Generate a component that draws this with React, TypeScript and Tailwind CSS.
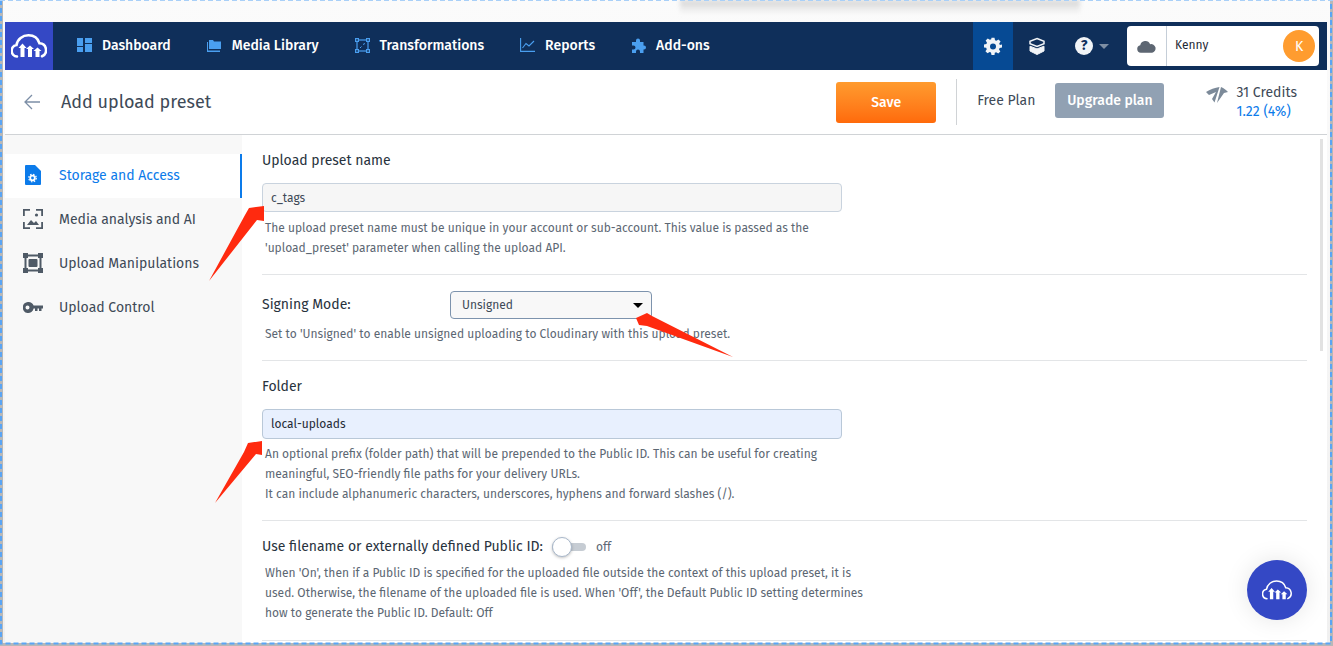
const FONT = "font-['Fira_Sans','Noto_Sans',sans-serif]";

function CloudLogo({ className, thin }: { className?: string; thin?: boolean }) {
  return (
    <svg viewBox="0 0 36 24" className={className} fill="none">
      <path d="M6 22.500A5.800 5.800 0 0 1 5.500 11C6.500 5 11.500 1.300 17.500 1.300c5.500 0 9.500 3.200 11 8a6.800 6.800 0 0 1 2.500 13" stroke="currentColor" strokeWidth={thin ? 1.800 : 2.600} strokeLinecap="round" />
      <path d="M11.500 9.500l4 4.500h-2v9h-4v-9h-2zM19 11.500l4 3.500h-2v8h-4v-8h-2zM26.500 13.500l4 3.500h-2v6h-4v-6h-2z" fill="currentColor" />
    </svg>
  );
}

function TopNavItem({ icon, label, className }: { icon: React.ReactNode; label: string; className: string }) {
  return (
    <div className={`flex items-center gap-[10px] pb-[2px] ${className}`}>
      {icon}
      <span className="text-[14px] font-medium text-white">{label}</span>
    </div>
  );
}

function SideItem({ icon, label, active }: { icon: React.ReactNode; label: string; active?: boolean }) {
  return (
    <div className={`flex h-11 items-center pb-[2px] pl-[18px] text-[14px] ${active ? 'border-r-2 border-[#0c7bea] bg-white text-[#0c7bea]' : 'text-[#3e4a57]'}`}>
      <span className="flex w-[36px]">{icon}</span>
      {label}
    </div>
  );
}

function Help({ children }: { children: React.ReactNode }) {
  return <p className="ml-[3px] text-[12px] leading-[20px] text-[#5c6773]">{children}</p>;
}

export default function App() {
  return (
    <div className={`relative h-[646px] w-[1333px] overflow-hidden bg-gradient-to-b from-[#fbfbfb] to-[#f0f0f0] pt-[22px] pl-[5px] ${FONT}`}>
      {/* Shadow of the window above */}
      <div className="absolute left-[680px] top-0 h-[14px] w-[400px] bg-gradient-to-b from-[#d4d4d4] to-transparent blur-[2px]" />

      <div className="relative w-[1322px]">
        {/* Top nav */}
        <header className="flex h-12 items-center bg-[#0f2f5a]">
          <div className="flex h-12 w-12 items-center justify-center bg-[#3448c5] text-white">
            <CloudLogo className="w-9" />
          </div>
          <TopNavItem
            label="Dashboard"
            className="ml-6"
            icon={
              <svg viewBox="0 0 15 14" className="h-[14px] w-[15px] fill-[#4a9ff0]">
                <path d="M0 0h6v8H0zM0 9h6v5H0zM8 0h7v5H8zM8 6h7v8H8z" />
              </svg>
            }
          />
          <TopNavItem
            label="Media Library"
            className="ml-[36px]"
            icon={
              <svg viewBox="0 0 15 13" className="h-[13px] w-[15px] fill-[#4a9ff0]">
                <path d="M2 1h4l1 1.500h7v7.500H2zM0 3h1v8.500h12V13H0z" />
              </svg>
            }
          />
          <TopNavItem
            label="Transformations"
            className="ml-[36px]"
            icon={
              <svg viewBox="0 0 15 15" className="h-[15px] w-[15px] text-[#4a9ff0]" fill="none" stroke="currentColor" strokeWidth="1.200">
                <rect x="2" y="2" width="11" height="11" />
                <rect x="0.600" y="0.600" width="2.800" height="2.800" fill="#0f2f5a" />
                <rect x="11.600" y="0.600" width="2.800" height="2.800" fill="#0f2f5a" />
                <rect x="0.600" y="11.600" width="2.800" height="2.800" fill="#0f2f5a" />
                <rect x="11.600" y="11.600" width="2.800" height="2.800" fill="#0f2f5a" />
                <path d="M5 10l1.500-1.500M8 6.500l2-1" strokeWidth="1" />
              </svg>
            }
          />
          <TopNavItem
            label="Reports"
            className="ml-[36px]"
            icon={
              <svg viewBox="0 0 15 14" className="h-[14px] w-[15px] text-[#4a9ff0]" fill="none" stroke="currentColor" strokeWidth="1.100">
                <path d="M.6 0v13.400H15M2.500 10l3.500-4.500 3 2.500L14 3" />
              </svg>
            }
          />
          <TopNavItem
            label="Add-ons"
            className="ml-[36px]"
            icon={
              <svg viewBox="0 0 15 15" className="h-[15px] w-[15px] fill-[#4a9ff0]">
                <path d="M5 2.500a2 2 0 1 1 4 0V4h3.500v3.500H13a2 2 0 1 1 0 4h-.5V15h-3.500v-1.500a2 2 0 1 0-4 0V15H1v-3.500h1.500a2 2 0 1 0 0-4H1V4h4z" />
              </svg>
            }
          />
          <div className="ml-auto flex h-12 items-center">
            <div className="flex h-12 w-10 items-center justify-center bg-[#064a94]">
              <svg viewBox="0 0 24 24" className="h-[18px] w-[18px] fill-[#f1f4f7]">
                <path fillRule="evenodd" d="M10 1h4l.7 3.200 1.800.8 2.800-1.800 2.800 2.800-1.800 2.800.8 1.800L24 10v4l-3.200.7-.8 1.800 1.800 2.800-2.800 2.800-2.800-1.800-1.800.8L14 24h-4l-.7-3.200-1.800-.8-2.800 1.800-2.800-2.800 1.800-2.800-.8-1.800L0 14v-4l3.200-.7.8-1.800L2.200 4.700 5 1.900l2.800 1.800 1.800-.8zM12 8.500a4 4 0 1 0 0 8 4 4 0 0 0 0-8z" />
              </svg>
            </div>
            <div className="ml-[15px] flex h-12 w-[18px] items-center justify-center">
              <svg viewBox="0 0 18 18" className="h-[18px] w-[18px]" fill="none" stroke="#f1f4f7">
                <path d="M9 1.500l7 2.700v2.600L9 9.500 2 6.800V4.200z" strokeWidth="1.500" />
                <path d="M2 9.200l7 2.700 7-2.700V14l-7 3.500L2 14z" fill="#f1f4f7" strokeWidth="1" />
              </svg>
            </div>
            <div className="ml-[29px] flex h-[18px] w-[18px] items-center justify-center rounded-full bg-[#f1f4f7] text-[14px] font-bold leading-none text-[#0f2f5a]">?</div>
            <div className="ml-[6px] h-0 w-0 border-x-[5px] border-t-[5px] border-x-transparent border-t-[#7d8ea3]" />
            <div className="ml-[18px] mr-[8px] flex h-10 w-[192px] items-center rounded-[4px] bg-white">
              <div className="flex h-10 w-[40px] items-center justify-center border-r border-[#c5ced8]">
                <svg viewBox="0 0 20 13" className="h-[13px] w-[19px] fill-[#5d6672]">
                  <path d="M4 13a4 4 0 0 1-.6-7.900A5.500 5.500 0 0 1 13.800 4 4.500 4.500 0 0 1 16 13z" />
                </svg>
              </div>
              <span className="ml-[8px] pb-[2px] text-[12px] text-[#1f2a36]">Kenny</span>
              <div className="ml-auto mr-1 flex h-8 w-8 items-center justify-center rounded-full bg-[#ff9c2f] text-[14px] text-white">K</div>
            </div>
          </div>
        </header>

        {/* Sub header */}
        <div className="flex h-[65px] items-center border-b border-[#d0d3d6] bg-white">
          <svg viewBox="0 0 16 16" className="ml-[19px] h-4 w-4 text-[#7c8ea6]" fill="none" stroke="currentColor" strokeWidth="1.300">
            <path d="M16 8H1M8 1L1 8l7 7" />
          </svg>
          <h1 className="ml-[21px] text-[18px] font-normal text-[#3e4a57]">Add upload preset</h1>
          <button className="ml-auto h-[41px] w-[100px] rounded-[3px] bg-gradient-to-b from-[#ff9b2e] to-[#ff6a0a] text-[14px] font-medium text-white">Save</button>
          <div className="ml-5 h-[46px] w-px bg-[#d0d3d6]" />
          <span className="ml-5 pb-[4px] text-[14px] text-[#3e4a57]">Free Plan</span>
          <button className="ml-5 mb-[4px] h-[35px] w-[109px] rounded-[3px] bg-[#91a1b3] text-[14px] font-medium text-white">Upgrade plan</button>
          <svg viewBox="0 0 22 16" className="ml-[42px] mb-[14px] h-4 w-[22px] fill-[#7c8a99]">
            <path d="M0 5C4 2.500 9 .5 13.500 0L8.500 15.500 6 12l4-7-7 3z" />
            <path d="M15 0c3 1 5 3 7 5l-4 1-7 10z" />
          </svg>
          <div className="ml-[8px] mr-[30px] text-[14px] leading-[19px]">
            <div className="text-[#3e4a57]">31 Credits</div>
            <div className="text-[#0c7bea]">1.22 (4%)</div>
          </div>
        </div>

        {/* Body */}
        <div className="flex h-[509px]">
          <aside className="w-[237px] shrink-0 bg-[#f8f8f8] pt-[19px]">
            <SideItem
              active
              label="Storage and Access"
              icon={
                <svg viewBox="0 0 16 20" className="ml-[2px] h-5 w-4">
                  <path fill="#0c7bea" d="M1 0h9l6 6v13a1 1 0 0 1-1 1H1a1 1 0 0 1-1-1V1a1 1 0 0 1 1-1z" />
                  <circle cx="7.500" cy="13" r="2.300" fill="none" stroke="#fff" strokeWidth="1.800" />
                  <circle cx="7.500" cy="13" r="3.800" fill="none" stroke="#fff" strokeWidth="1.200" strokeDasharray="1.500 1.500" />
                </svg>
              }
            />
            <SideItem
              label="Media analysis and AI"
              icon={
                <svg viewBox="0 0 20 20" className="h-5 w-5 text-[#4f5a66]" fill="none" stroke="currentColor" strokeWidth="1.800">
                  <path d="M.9 7V.9H7M13 .9h6.100V7M19.100 13v6.100H13M7 19.100H.9V13" />
                  <path d="M4 16l4-5 3 3 2-2 3 4z" fill="currentColor" stroke="none" />
                  <circle cx="13.500" cy="6" r="1.600" fill="currentColor" stroke="none" />
                </svg>
              }
            />
            <SideItem
              label="Upload Manipulations"
              icon={
                <svg viewBox="0 0 20 20" className="h-5 w-5 text-[#4f5a66]" fill="none" stroke="currentColor" strokeWidth="2">
                  <rect x="2.500" y="2.500" width="15" height="15" />
                  <rect x="0.500" y="0.500" width="4" height="4" fill="currentColor" strokeWidth="1" />
                  <rect x="15.500" y="0.500" width="4" height="4" fill="currentColor" strokeWidth="1" />
                  <rect x="0.500" y="15.500" width="4" height="4" fill="currentColor" strokeWidth="1" />
                  <rect x="15.500" y="15.500" width="4" height="4" fill="currentColor" strokeWidth="1" />
                  <rect x="5.500" y="6" width="9" height="8" rx="1" fill="currentColor" stroke="none" />
                </svg>
              }
            />
            <SideItem
              label="Upload Control"
              icon={
                <svg viewBox="0 0 20 11" className="h-[11px] w-5 fill-[#4f5a66]">
                  <path fillRule="evenodd" d="M5.500 0a5.500 5.500 0 0 1 5.100 3.500H20v3h-1.500V9h-2.500V6.500h-1.500V9H12V6.500h-1.400A5.500 5.500 0 1 1 5.500 0zM4.500 3.500a2 2 0 1 0 0 4 2 2 0 0 0 0-4z" />
                </svg>
              }
            />
          </aside>

          {/* Form */}
          <main className="relative flex-1 bg-white pl-[20px] pr-[20px] pt-[13px]">
            <label className="text-[14px] text-[#28323d]">Upload preset name</label>
            <div className="mt-[11px] flex h-[29px] w-[580px] items-center rounded-[4px] border border-[#c9d3de] bg-[#f6f6f6] pl-2 text-[12px] text-[#3e4a57]">c_tags</div>
            <div className="mt-[6px] pb-[16px]">
              <Help>The upload preset name must be unique in your account or sub-account. This value is passed as the</Help>
              <Help>'upload_preset' parameter when calling the upload API.</Help>
            </div>

            <div className="border-t border-[#e3e5e7] pt-[16px] pb-[16px]">
              <div className="flex items-center">
                <label className="w-[188px] pb-[2px] text-[14px] text-[#28323d]">Signing Mode:</label>
                <div className="flex h-[28px] w-[202px] items-center justify-between rounded-[4px] border border-[#7d93ad] bg-[#f8f8f8] pl-[11px] pr-[8px] text-[12px] text-[#3e4a57]">
                  Unsigned
                  <span className="h-0 w-0 border-x-[5px] border-t-[5px] border-x-transparent border-t-black" />
                </div>
              </div>
              <div className="mt-[5px]"><Help>Set to 'Unsigned' to enable unsigned uploading to Cloudinary with this upload preset.</Help></div>
            </div>

            <div className="border-t border-[#e3e5e7] pt-[13px]">
              <label className="text-[14px] text-[#28323d]">Folder</label>
              <div className="mt-[11px] flex h-[30px] w-[580px] items-center rounded-[4px] border border-[#b9c8d8] bg-[#e8f0fe] pl-2 text-[12px] text-[#1f2a36]">local-uploads</div>
              <div className="mt-[5px] pb-[16px]">
                <Help>An optional prefix (folder path) that will be prepended to the Public ID. This can be useful for creating</Help>
                <Help>meaningful, SEO-friendly file paths for your delivery URLs.</Help>
                <Help>It can include alphanumeric characters, underscores, hyphens and forward slashes (/).</Help>
              </div>
            </div>

            <div className="border-y border-[#e3e5e7] pt-[15px] pb-[17px]">
              <div className="flex items-center">
                <label className="text-[14px] text-[#28323d]">Use filename or externally defined Public ID:</label>
                <div className="relative ml-[9px] h-[8px] w-[34px] rounded-full bg-[#c6ccd3]">
                  <span className="absolute left-0 -top-[6px] h-[20px] w-[20px] rounded-full border border-[#a9b8cb] bg-white shadow-[0_1px_3px_rgba(0,0,0,0.25)]" />
                </div>
                <span className="ml-[10px] text-[12px] text-[#5c6773]">off</span>
              </div>
              <div className="mt-[6px]">
                <Help>When 'On', then if a Public ID is specified for the uploaded file outside the context of this upload preset, it is</Help>
                <Help>used. Otherwise, the filename of the uploaded file is used. When 'Off', the Default Public ID setting determines</Help>
                <Help>how to generate the Public ID. Default: Off</Help>
              </div>
            </div>

            {/* Scrollbar */}
            <div className="absolute right-[4px] top-[4px] h-[212px] w-[3px] bg-[#e2e2e2]" />
          </main>
        </div>
      </div>

      {/* Annotation arrows and the dashed selection frame of the screenshot */}
      <svg viewBox="0 0 1333 646" className="pointer-events-none absolute inset-0 h-[646px] w-[1333px]">
        <path d="M264 206L249 208L245 215L209 281L257 220L264 221z" fill="#ff2a0f" />
        <path d="M636 318L647 313L652 316L733 357L647 326L639 325z" fill="#ff2a0f" />
        <path d="M262 441L248 443L244 452L215 503L256 454L262 455z" fill="#ff2a0f" />
        <path d="M1.500 0V644.500H1331.500V0" fill="none" stroke="#b8b8b8" strokeWidth="3" />
        <path d="M1 0V643.500H1331V0" fill="none" stroke="#5aa5f5" strokeWidth="2" strokeDasharray="5 3" />
        <path d="M0 .5H1333" fill="none" stroke="#a9d0f8" strokeWidth="1" strokeDasharray="5 3" />
      </svg>

      {/* Floating chat button */}
      <div className="absolute left-[1247px] top-[560px] flex h-[60px] w-[60px] items-center justify-center rounded-full bg-[#3448c5] text-white shadow-[0_0_24px_rgba(0,0,0,0.1)]">
        <CloudLogo thin className="w-[30px]" />
      </div>
    </div>
  );
}
